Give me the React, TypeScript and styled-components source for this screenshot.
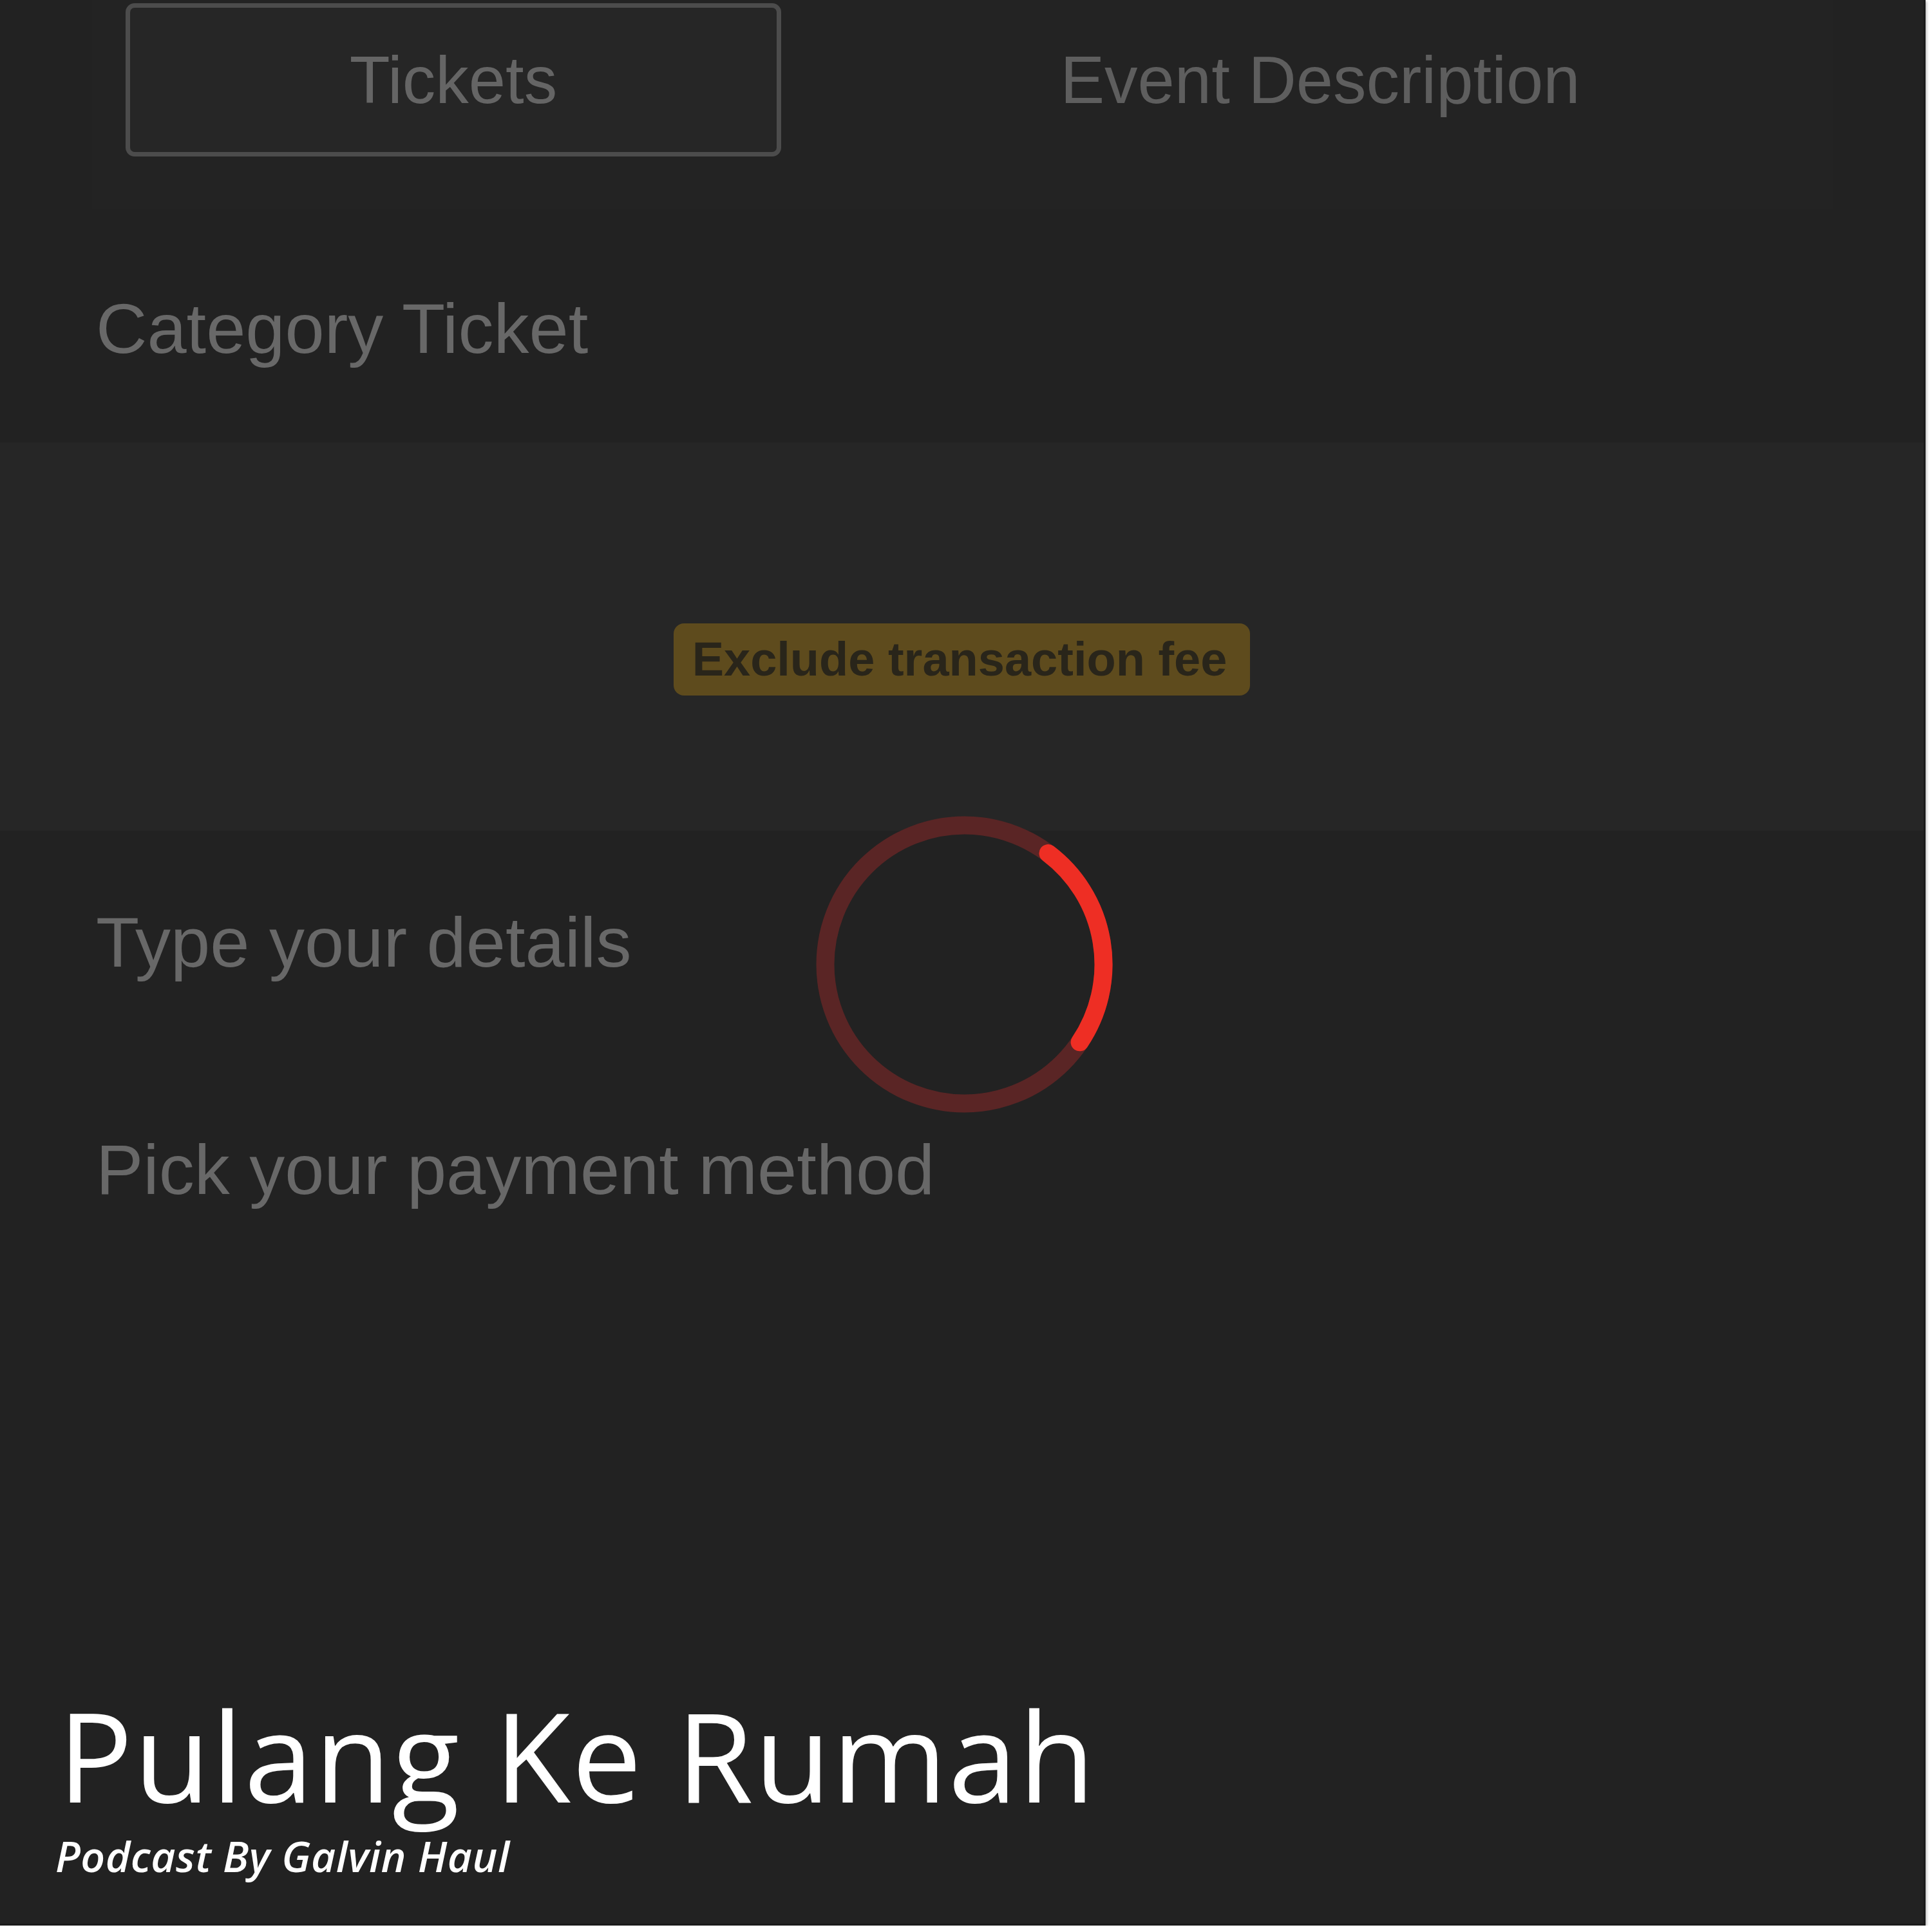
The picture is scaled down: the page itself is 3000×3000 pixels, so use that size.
import React from 'react';
import styled, { createGlobalStyle } from 'styled-components';

const GlobalStyle = createGlobalStyle`
  html, body {
    margin: 0;
    padding: 0;
    background: #ffffff;
  }
`;

const Screen = styled.div`
  position: relative;
  width: 2990px;
  height: 2990px;
  box-sizing: border-box;
  display: flex;
  flex-direction: column;
  background: #222222;
  border-right: 3px solid #1a1a1a;
  border-bottom: 3px solid #1a1a1a;
  box-shadow: 2px 2px 4px rgba(0, 0, 0, 0.25);
  font-family: 'Liberation Sans', Arial, sans-serif;
  overflow: hidden;
`;

const TabBar = styled.div`
  margin: 0 140px 0 143px;
  height: 325px;
  padding: 5px 0 0 52px;
  box-sizing: border-box;
  display: grid;
  grid-template-columns: 1018px 1018px;
  grid-template-rows: 238px;
  column-gap: 328px;
  background: #232323;
`;

const Tab = styled.div<{ $active?: boolean }>`
  display: flex;
  align-items: center;
  justify-content: center;
  box-sizing: border-box;
  border: 7px solid ${(p) => (p.$active ? '#4c4c4c' : 'transparent')};
  border-radius: 14px;
  background: ${(p) => (p.$active ? '#262626' : 'transparent')};
  color: ${(p) => (p.$active ? '#656565' : '#5e5e5e')};
  font-size: 103px;
  line-height: 1;
`;

const Section = styled.div`
  padding: 130px 149px 0;
  height: 362px;
  box-sizing: border-box;
`;

const Heading = styled.div<{ $gap?: number }>`
  margin-top: ${(p) => p.$gap ?? 0}px;
  color: #686868;
  font-size: 110px;
  line-height: 1;
  white-space: nowrap;
`;

const FeePanel = styled.div`
  height: 603px;
  box-sizing: border-box;
  padding-top: 281px;
  display: flex;
  justify-content: center;
  align-items: flex-start;
  background: #262626;
`;

const FeeBadge = styled.div`
  padding: 19px 36px 19px 29px;
  border-radius: 16px;
  background: #5e4b1d;
  color: #29251a;
  font-size: 74px;
  font-weight: 700;
  line-height: 1;
  white-space: nowrap;
`;

const Steps = styled.div`
  padding: 118px 149px 0;
`;

const TitleBlock = styled.div`
  margin-top: auto;
  padding: 0 0 73px 86px;
  display: flex;
  flex-direction: column;
  gap: 27px;
  color: #ffffff;
  font-family: 'Open Sans', 'Noto Sans', sans-serif;
`;

const Title = styled.div`
  margin-left: 4px;
  font-size: 193px;
  line-height: 1;
  font-weight: 400;
  letter-spacing: 2px;
  white-space: nowrap;
`;

const Subtitle = styled.div`
  font-size: 66px;
  line-height: 1;
  font-style: italic;
  font-weight: 600;
  letter-spacing: 0.5px;
  white-space: nowrap;
`;

const SpinnerWrap = styled.div`
  position: absolute;
  left: 1267px;
  top: 1267px;
  width: 461px;
  height: 461px;
`;

const Spinner = () => (
  <SpinnerWrap>
    <svg width="461" height="461" viewBox="0 0 461 461">
      <circle cx="230.5" cy="230.5" r="216" fill="none" stroke="#5a2525" strokeWidth="28" />
      <path
        d="M 360.5 58 A 216 216 0 0 1 409.6 351.3"
        fill="none"
        stroke="#ee2e24"
        strokeWidth="28"
        strokeLinecap="round"
      />
    </svg>
  </SpinnerWrap>
);

export default function App() {
  return (
    <>
      <GlobalStyle />
      <Screen>
        <TabBar>
          <Tab $active>Tickets</Tab>
          <Tab>Event Description</Tab>
        </TabBar>
        <Section>
          <Heading>Category Ticket</Heading>
        </Section>
        <FeePanel>
          <FeeBadge>Exclude transaction fee</FeeBadge>
        </FeePanel>
        <Steps>
          <Heading>Type your details</Heading>
          <Heading $gap={243}>Pick your payment method</Heading>
        </Steps>
        <TitleBlock>
          <Title>Pulang Ke Rumah</Title>
          <Subtitle>Podcast By Galvin Haul</Subtitle>
        </TitleBlock>
        <Spinner />
      </Screen>
    </>
  );
}
